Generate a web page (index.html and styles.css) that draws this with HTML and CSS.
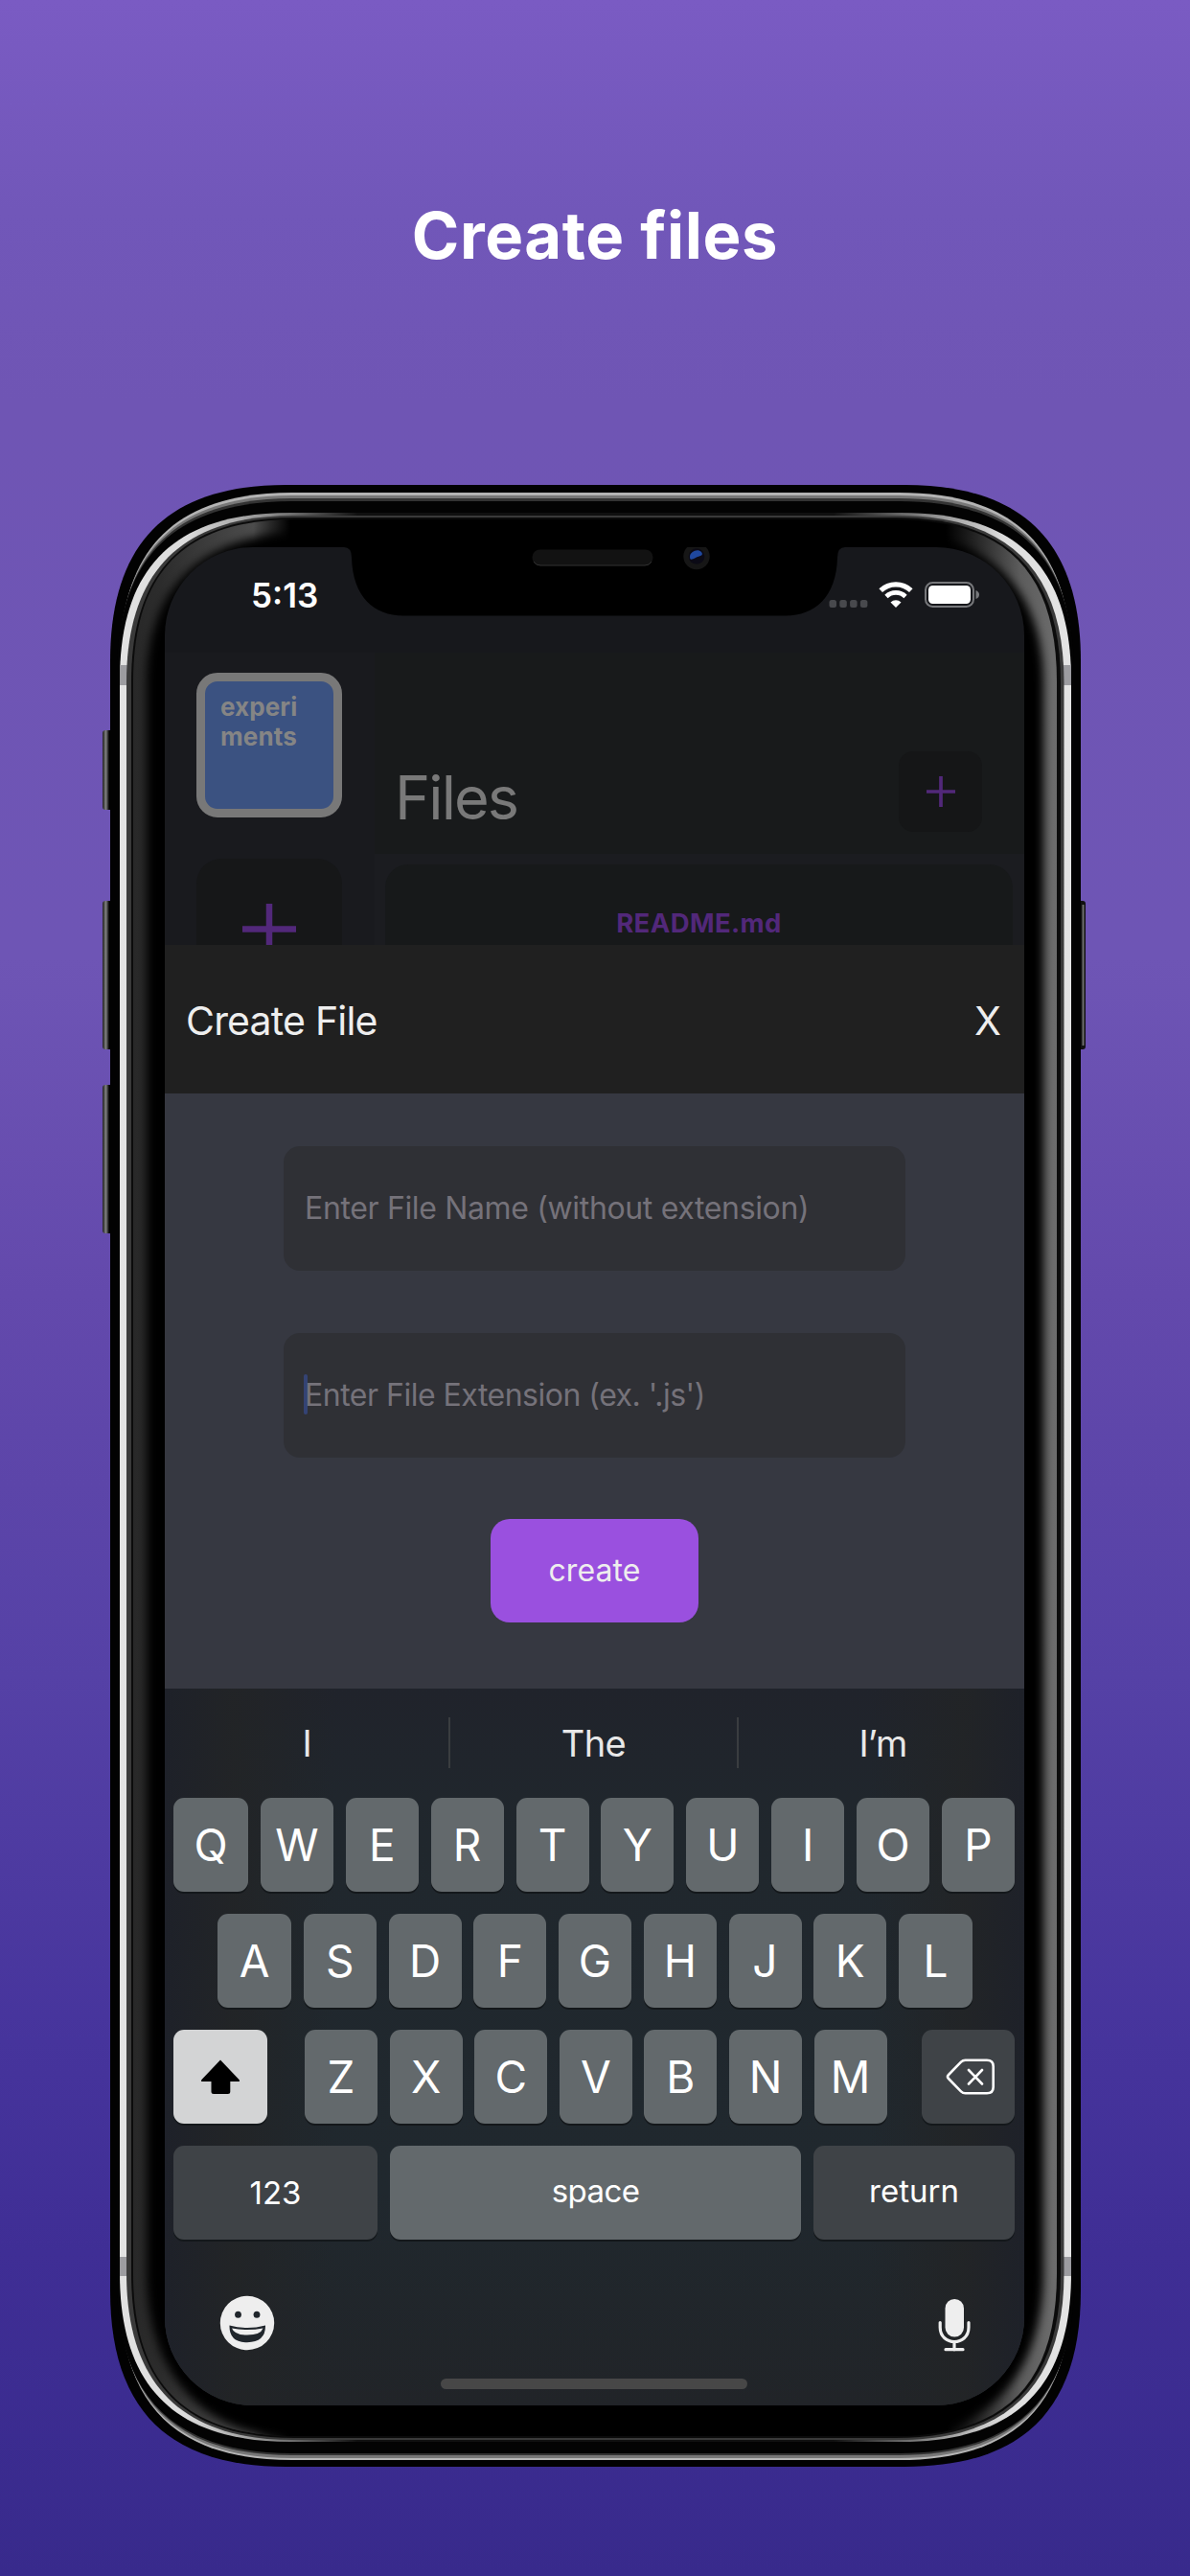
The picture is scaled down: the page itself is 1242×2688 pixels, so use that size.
FILE: index.html
```html
<!DOCTYPE html>
<html lang="en">
<head>
<meta charset="utf-8">
<title>Create files</title>
<link rel="stylesheet" href="styles.css">
</head>
<body>
<main class="poster">
  <h1 class="headline">Create files</h1>
  <section class="phone">
    <svg class="frame" viewBox="107 506 1026 2068" width="1026" height="2068" aria-hidden="true">
      <defs>
        <linearGradient id="rim" gradientUnits="userSpaceOnUse" x1="125" y1="0" x2="1118" y2="0">
          <stop offset="0" stop-color="#e2e2e2"/><stop offset=".07" stop-color="#dcdcdc"/><stop offset=".16" stop-color="#8a8a8a"/><stop offset=".25" stop-color="#101010"/>
          <stop offset=".75" stop-color="#101010"/><stop offset=".85" stop-color="#8a8a8a"/><stop offset=".93" stop-color="#dedede"/><stop offset="1" stop-color="#e4e4e4"/>
        </linearGradient>
        <linearGradient id="glass" gradientUnits="userSpaceOnUse" x1="139" y1="0" x2="1103" y2="0">
          <stop offset="0" stop-color="#282828"/><stop offset=".03" stop-color="#2c2c2c"/><stop offset=".13" stop-color="#4c4c4c"/><stop offset=".17" stop-color="#000"/>
          <stop offset=".88" stop-color="#000"/><stop offset=".96" stop-color="#5c5c5c"/><stop offset="1" stop-color="#6c6c6c"/>
        </linearGradient>
        <linearGradient id="key" x1="0" y1="0" x2="1" y2="0"><stop offset="0" stop-color="#202020"/><stop offset=".25" stop-color="#7e7e7e"/><stop offset=".5" stop-color="#000"/></linearGradient>
        <filter id="soft" x="-5%" y="-5%" width="110%" height="110%"><feGaussianBlur stdDeviation="5"/></filter>
        <clipPath id="glassclip"><path d="M139 712C139 596 193 542 309 542H933C1049 542 1103 596 1103 712V2372C1103 2488 1049 2542 933 2542H309C193 2542 139 2488 139 2372Z"/></clipPath>
      </defs>
      <rect x="107" y="762" width="14" height="83" rx="3" fill="url(#key)"/>
      <rect x="107" y="940" width="14" height="155" rx="3" fill="url(#key)"/>
      <rect x="107" y="1132" width="14" height="155" rx="3" fill="url(#key)"/>
      <rect x="1120" y="940" width="13" height="155" rx="3" fill="#111"/>
      <rect x="1129.500" y="944" width="2" height="147" fill="#6e6e6e"/>
      <path fill="#020202" d="M115 690C115 566 175 506 299 506H944C1068 506 1128 566 1128 690V2390C1128 2514 1068 2574 944 2574H299C175 2574 115 2514 115 2390Z"/>
      <path fill="#b4b4b4" d="M125 694C125 572 183 514 305 514H938C1060 514 1118 572 1118 694V2387C1118 2509 1060 2567 938 2567H305C183 2567 125 2509 125 2387Z"/>
      <path fill="#777" d="M124 697C124 575 183 517 305 517H938C1060 517 1119 575 1119 697V2384C1119 2506 1060 2565 938 2565H305C183 2565 124 2506 124 2384Z"/>
      <path fill="#333" d="M123 700C123 578 183 520 305 520H938C1060 520 1120 578 1120 700V2382C1120 2504 1060 2562 938 2562H305C183 2562 123 2504 123 2382Z"/>
      <path fill="#030303" d="M122 703C122 581 183 523 305 523H938C1060 523 1121 581 1121 703V2380C1121 2502 1060 2560 938 2560H305C183 2560 122 2502 122 2380Z"/>
      <path fill="url(#rim)" d="M125 710C125 592 182 535 303 535H940C1061 535 1118 592 1118 710V2372C1118 2490 1061 2548 940 2548H303C182 2548 125 2490 125 2372Z"/>
      <path fill="#9c9ca0" d="M125 694h8v21h-8zM1110 694h8v21h-8zM125 2355h8v20h-8zM1110 2355h8v20h-8z"/>
      <path fill="#3a3a3a" d="M132 712C132 596 190 538 306 538H937C1053 538 1110.500 596 1110.500 712V2372C1110.500 2488 1053 2546 937 2546H306C190 2546 132 2488 132 2372Z"/>
      <path fill="#0b0b0b" d="M137 712C137 596 192 540 308 540H934C1050 540 1107 596 1107 712V2372C1107 2488 1050 2544 934 2544H308C192 2544 137 2488 137 2372Z"/>
      <path fill="url(#glass)" d="M139 712C139 596 193 542 309 542H933C1049 542 1103 596 1103 712V2372C1103 2488 1049 2542 933 2542H309C193 2542 139 2488 139 2372Z"/>
      <g clip-path="url(#glassclip)"><path filter="url(#soft)" d="M153 712C153 610 215 556 315 556H925C1027 556 1089 610 1089 712V2372C1089 2480 1027 2545 925 2545H315C215 2545 153 2480 153 2372Z"/></g>
    </svg>
    <div class="screen">
      <header class="status">
        <span class="time">5:13</span>
        <svg class="indicators" viewBox="0 0 158 30" width="158" height="30" aria-hidden="true">
          <g fill="#48494d"><rect x=".5" y="20" width="7.500" height="8" rx="2.500"/><rect x="11.300" y="20" width="7.500" height="8" rx="2.500"/><rect x="22.100" y="20" width="7.500" height="8" rx="2.500"/><rect x="32.900" y="20" width="7.500" height="8" rx="2.500"/></g>
          <g fill="none" stroke="#fff" stroke-width="5.200"><path d="M54.200 10.200a23 23 0 0 1 31.600 0"/><path d="M60 16.400a14.500 14.500 0 0 1 20 0" stroke-width="4.800"/></g>
          <path fill="#fff" d="M70 28l-5.500-5.600a8 8 0 0 1 11 0z"/>
          <rect x="101" y="2" width="50" height="25" rx="7.500" fill="none" stroke="#77787b" stroke-width="2"/>
          <rect x="104" y="5" width="44" height="19" rx="4.500" fill="#fff"/>
          <path fill="#77787b" d="M153.500 10q3.500 1.500 3.500 4.500t-3.500 4.500z"/>
        </svg>
      </header>
      <div class="app">
        <aside class="projects">
          <div class="project">experi<br>ments</div>
          <div class="add-project"><svg viewBox="0 0 56 56" width="56" height="56"><path d="M0 29.500H56M28 3V56" stroke="#52287a" stroke-width="6.500"/></svg></div>
        </aside>
        <div class="files">
          <div class="files-head">
            <h2>Files</h2>
            <div class="add-file"><svg viewBox="0 0 32 32" width="32" height="32"><path d="M1 16H31M16 0V32" stroke="#52287a" stroke-width="3.700"/></svg></div>
          </div>
          <div class="file-list"><div class="file">README.md</div></div>
        </div>
      </div>
      <div class="sheet-head"><span class="sheet-title">Create File</span><span class="close">X</span></div>
      <form class="sheet">
        <div class="field"><span class="name">Enter File Name (without extension)</span></div>
        <div class="field focused"><span class="ext">Enter File Extension (ex. '.js')</span></div>
        <div class="create">create</div>
      </form>
      <div class="keyboard">
        <div class="suggest"><span>I</span><span>The</span><span>I’m</span></div>
        <div class="row row1"><b>Q</b><b>W</b><b>E</b><b>R</b><b>T</b><b>Y</b><b>U</b><b>I</b><b>O</b><b>P</b></div>
        <div class="row row2"><b>A</b><b>S</b><b>D</b><b>F</b><b>G</b><b>H</b><b>J</b><b>K</b><b>L</b></div>
        <div class="row row3">
          <b class="shift"><svg viewBox="0 0 42 38" width="42" height="38"><path d="M21 1.500L40.500 22q1.500 2-1 2H31.300V34.500q0 2.500-2.500 2.500H14q-2.500 0-2.500-2.500V24H2.500q-2.500 0-1-2z"/></svg></b>
          <b>Z</b><b>X</b><b>C</b><b>V</b><b>B</b><b>N</b><b>M</b>
          <b class="del"><svg viewBox="0 0 52 38" width="52" height="38" fill="none" stroke="#fff" stroke-width="2.600" stroke-linecap="round" stroke-linejoin="round"><path d="M20.500 1.700H43q6.700 0 6.700 6.500V29.800q0 6.500-6.700 6.500H20.500q-2.500 0-4.500-2L3 21q-2-2 0-4L16 3.700q2-2 4.500-2z"/><path d="M24 12L38 26.500M38 12L24 26.500"/></svg></b>
        </div>
        <div class="row row4"><b class="num">123</b><b class="space">space</b><b class="return">return</b></div>
        <div class="tools">
          <svg viewBox="0 0 58 58" width="58" height="58"><circle cx="29" cy="29" r="28.200" fill="#eee"/><g fill="#20262c"><ellipse cx="19.500" cy="20.300" rx="3.400" ry="3.500"/><ellipse cx="39" cy="20.300" rx="3.400" ry="3.500"/><path d="M10.500 31.500Q29 36.500 48 31.500Q48.500 49 29 49.300Q10 49 10.500 31.500Z"/></g><path fill="#eee" d="M13 34.500Q29 37.500 45.500 34.500Q43 41.500 29 41.600Q15.500 41.500 13 34.500Z"/></svg>
          <svg viewBox="0 0 34 56" width="34" height="56"><rect x="7.500" y="0" width="19.500" height="39.500" rx="9.700" fill="#eee"/><path d="M2.200 24.500V29.500C2.200 49.500 32 49.500 32 29.500V24.500M17 45V53M8 52.700H26" fill="none" stroke="#eee" stroke-width="3.200" stroke-linecap="round"/></svg>
        </div>
        <div class="home"></div>
      </div>
      <svg class="notch" viewBox="0 0 523 72" width="523" height="72" aria-hidden="true">
        <path d="M0 0H523Q515 0 515 11C514 52 491 71.500 461 71.500H62C32 71.500 9 52 8 11Q8 0 0 0Z"/>
        <rect x="196.500" y="2.500" width="126" height="16.500" rx="8" fill="#121212"/>
        <path d="M198 15q2 4 7 4h109q5 0 7-4" fill="none" stroke="#333"/>
        <circle cx="368" cy="9.500" r="13.700" fill="#161616"/><circle cx="368" cy="9.500" r="8.300" fill="#0b0a16"/><path d="M361 10c0-5 8-9 12-5 3 4-2 4-6 6-4 2-6 3-6-1z" fill="#1f489f"/>
      </svg>
    </div>
  </section>
</main>
</body>
</html>
```
FILE: styles.css
```css
* { box-sizing: border-box; }
body { margin: 0; font-family: Inter, "Liberation Sans", sans-serif; }
.poster {
  width: 1242px; height: 2688px; overflow: hidden;
  background: linear-gradient(#7a5bc3 0, #7157b9 220px, #6f55b4 420px, #6e55b5 1000px, #6349ac 1350px, #5541a6 1750px, #46349c 2130px, #3f2e95 2350px, #382a8c 2688px);
}
.headline { margin: 0; height: 506px; padding-top: 205px; text-align: center; color: #fff; font-size: 67px; line-height: 82px; font-weight: 700; letter-spacing: .6px; }
.phone { position: relative; width: 1013px; height: 2068px; margin-left: 115px; padding: 65px 59px 64px 57px; }
.frame { position: absolute; left: -8px; top: 0; }
.screen { position: relative; height: 1939px; border-radius: 92px; overflow: hidden; background: #17181c; display: flex; flex-direction: column; }
.notch { position: absolute; left: 187px; top: 0; }

.status { height: 110px; display: flex; justify-content: space-between; align-items: flex-start; padding: 29px 46px 0 90px; }
.time { color: #fff; font-size: 35px; line-height: 42px; font-weight: 600; }
.indicators { margin-top: 6px; }

.app { height: 305px; display: flex; overflow: hidden; }
.projects { width: 219px; padding: 21px 34px 0 33px; background: #191a1e; display: flex; flex-direction: column; gap: 43px; }
.project { height: 151px; flex: none; border: 9px solid #787878; border-radius: 22px; background: #3b5281; color: #858585; padding: 11px 0 0 16px; font-size: 26px; line-height: 31px; font-weight: 700; letter-spacing: .1px; }
.add-project { height: 151px; flex: none; border-radius: 26px; background: #161718; padding: 44px 0 0 48px; }
.files { flex: 1; background: #1b1c20; }
.files-head { height: 210px; background: #181a1b; display: flex; justify-content: space-between; align-items: flex-end; padding: 0 44px 23px 21px; }
.files-head h2 { margin: 0 0 -2px; color: #797979; font-size: 63px; line-height: 76px; font-weight: 400; letter-spacing: -1.9px; }
.add-file { width: 87px; height: 84px; border-radius: 15px; background: #151617; display: flex; align-items: center; justify-content: center; }
.file-list { padding: 11px 12px 0 11px; }
.file { height: 120px; border-radius: 24px; background: #17191a; color: #52287a; text-align: center; padding-top: 44px; font-size: 27.5px; line-height: 34px; font-weight: 700; letter-spacing: .4px; }

.sheet-head { height: 155px; background: #202020; color: #eee; display: flex; justify-content: space-between; align-items: center; padding: 2px 24px 0 22px; font-size: 41px; }
.sheet-title { letter-spacing: -.8px; }
.sheet { margin: 0; height: 621px; background: #363841; padding-top: 55px; display: flex; flex-direction: column; align-items: center; gap: 65px; }
.field { position: relative; width: 649px; height: 130px; border-radius: 17px; background: #2f3035; color: #75727a; display: flex; align-items: center; padding-left: 22px; padding-bottom: 1px; font-size: 32px; white-space: nowrap; }
.focused::before { content: ""; position: absolute; left: 21px; top: 43px; width: 4px; height: 42px; border-radius: 2px; background: #344374; }
.name { letter-spacing: -.35px; }
.ext { position: relative; letter-spacing: -.5px; }
.create { width: 217px; height: 108px; margin-top: -1px; border-radius: 20px; background: #9a50df; color: #eee; display: flex; align-items: center; justify-content: center; padding-bottom: 2px; font-size: 32px; letter-spacing: .1px; }

.keyboard { flex: 1; padding: 0 10px 0 9px; background: linear-gradient(90deg, #1e2129 0, rgba(34,36,38,.9) 8%, rgba(32,38,45,0) 20%, rgba(32,38,45,0) 82%, rgba(34,36,38,.9) 93%, #1e2129 100%), linear-gradient(#20232b 0, #20272d 20%, #20282e 70%, #212428 100%); }
.suggest { height: 114px; padding-top: 30px; display: grid; grid-template-columns: 287px 303px 288px; text-align: center; color: #e8e8e8; font-size: 38px; line-height: 53px; }
.suggest span { height: 53px; padding-top: 1px; }
.suggest span:first-child { padding-right: 8px; }
.suggest span:nth-child(2) { border-left: 2px solid #3a3d40; border-right: 2px solid #3a3d40; letter-spacing: -.6px; }
.suggest span:last-child { padding-left: 13px; letter-spacing: -.8px; }
.row { display: flex; justify-content: space-between; margin-bottom: 23px; }
.row b { width: 76px; height: 98px; border-radius: 11px; background: #63696c; box-shadow: 0 2px 0 #14181b; color: #fff; font-weight: 400; font-size: 46px; display: flex; align-items: center; justify-content: center; }
.row1 b:first-child { width: 78px; }
.row2 { padding: 0 44px 0 46px; }
.row2 b:first-child, .row2 b:last-child { width: 77px; }
.row3 { justify-content: flex-start; }
.row3 b:nth-child(n+3):nth-child(-n+8) { margin-left: 12.600px; }
.row3 .shift { width: 98px; margin-right: 39px; background: #d3d4d5; }
.row3 .del { width: 97px; margin-left: auto; padding-left: 5px; }
.row .del, .row .num, .row .return { background: #3f4347; }
.row4 { margin: 0; gap: 13px; }
.row4 .num { width: 213px; font-size: 33px; }
.row4 .space { flex: 1; font-size: 33px; letter-spacing: -.6px; padding-bottom: 5px; }
.row4 .return { width: 210px; font-size: 33px; padding-bottom: 5px; }
.tools { display: flex; justify-content: space-between; align-items: flex-start; padding: 58px 46px 0 48px; }
.tools svg + svg { margin-top: 4px; }
.home { width: 320px; height: 11px; border-radius: 6px; background: #474747; margin: 27px auto 0 279px; }
```
